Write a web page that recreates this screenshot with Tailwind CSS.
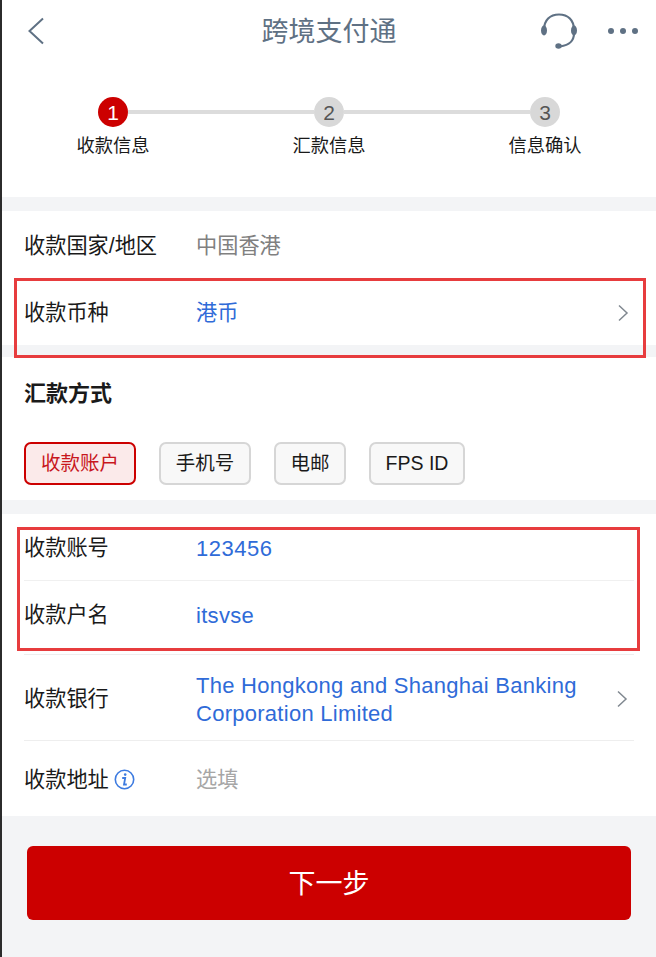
<!DOCTYPE html>
<html lang="zh">
<head>
    <meta charset="UTF-8">
    <meta name="viewport" content="width=device-width, initial-scale=1.0">
    <title>跨境支付通</title>
    <script src="https://cdn.jsdelivr.net/npm/@tailwindcss/browser@4"></script>
</head>
<body class="bg-white">
    <div class="relative w-[656px] h-[957px] overflow-hidden border-l-2 border-[#2b2b2b] bg-white text-[21.2px] text-[#1a1a1a] font-['Liberation_Sans','Noto_Sans_CJK_SC',sans-serif]">
        <!-- header -->
        <div class="grid grid-cols-[1fr_auto_1fr] items-center h-[62px] pl-[25px] pr-[18px]">
            <svg class="w-[18px] h-[28px]" viewBox="0 0 18 28" fill="none" stroke="#5f7184" stroke-width="2"><path d="M16 1.5 2.5 14 16 26.5"/></svg>
            <div class="text-[27px] leading-none text-[#5f7184] pt-[3px] mr-[7px]">跨境支付通</div>
            <div class="flex items-center justify-end">
                <svg class="w-[38px] h-[36px] mr-[30px]" viewBox="0 0 38 36" fill="none" stroke="#5f7184" stroke-width="2.2">
                    <path d="M4 17C4 7 10 1.5 19 1.5S34 7 34 17"/>
                    <path d="M34 20C34 28 30 32 20 33.5"/>
                    <ellipse cx="4" cy="17.5" rx="3" ry="5" fill="#5f7184" stroke="none"/>
                    <ellipse cx="34" cy="17.5" rx="3" ry="5" fill="#5f7184" stroke="none"/>
                    <ellipse cx="18.5" cy="33" rx="3.2" ry="2.8" fill="#5f7184" stroke="none"/>
                </svg>
                <div class="flex gap-[6px]">
                    <span class="w-[6px] h-[6px] rounded-full bg-[#5f7184]"></span>
                    <span class="w-[6px] h-[6px] rounded-full bg-[#5f7184]"></span>
                    <span class="w-[6px] h-[6px] rounded-full bg-[#5f7184]"></span>
                </div>
            </div>
        </div>

        <!-- stepper -->
        <div class="h-[135px] pt-[35px]">
            <div class="flex items-center pl-[96px] text-[21px] leading-none">
                <span class="flex items-center justify-center w-[30px] h-[30px] rounded-full bg-[#cc0000] text-white">1</span>
                <span class="w-[186px] h-[4px] bg-[#dcdcdc]"></span>
                <span class="flex items-center justify-center w-[30px] h-[30px] rounded-full bg-[#d8d8d8] text-[#555]">2</span>
                <span class="w-[186px] h-[4px] bg-[#dcdcdc]"></span>
                <span class="flex items-center justify-center w-[30px] h-[30px] rounded-full bg-[#d8d8d8] text-[#555]">3</span>
            </div>
            <div class="flex pl-[3px] mt-[9px] text-[18.3px] leading-[20px]">
                <div class="w-[216px] text-center">收款信息</div>
                <div class="w-[216px] text-center">汇款信息</div>
                <div class="w-[216px] text-center">信息确认</div>
            </div>
        </div>
        <div class="h-[14px] bg-[#f3f4f6]"></div>

        <!-- currency -->
        <div class="flex items-center h-[68px] pl-[22px] pr-[23px] pt-[2px]">
            <div class="w-[172px]">收款国家/地区</div>
            <div class="text-[#808080]">中国香港</div>
        </div>
        <div class="flex items-center h-[66px] pl-[22px] pr-[27px] pt-[1px]">
            <div class="w-[172px]">收款币种</div>
            <div class="flex-1 text-[#2f6bd8]">港币</div>
            <svg class="w-[12px] h-[18px]" viewBox="0 0 12 18" fill="none" stroke="#808890" stroke-width="1.5"><path d="M2 1.5 10 9 2 16.5"/></svg>
        </div>
        <div class="h-[12px] bg-[#f3f4f6]"></div>

        <!-- method -->
        <div class="h-[143px] pl-[22px] pt-[24px]">
            <div class="text-[22px] leading-[26px] font-bold">汇款方式</div>
            <div class="flex gap-[23px] mt-[35px] text-[19.5px]">
                <div class="flex items-center justify-center w-[112px] h-[43px] rounded-[7px] border-2 border-[#cc0000] bg-[#fbeaea] text-[#c8161d]">收款账户</div>
                <div class="flex items-center justify-center w-[92px] h-[43px] rounded-[7px] border-2 border-[#d6d6d6] bg-[#f8f8f8]">手机号</div>
                <div class="flex items-center justify-center w-[72px] h-[43px] rounded-[7px] border-2 border-[#d6d6d6] bg-[#f8f8f8]">电邮</div>
                <div class="flex items-center justify-center w-[96px] h-[43px] rounded-[7px] border-2 border-[#d6d6d6] bg-[#f8f8f8]">FPS ID</div>
            </div>
        </div>
        <div class="h-[14px] bg-[#f3f4f6]"></div>

        <!-- account rows -->
        <div class="flex flex-col ml-[22px] mr-[22px]">
            <div class="flex items-center h-[67px] pt-[1px] border-b border-[#f0f0f0]">
                <div class="w-[172px]">收款账号</div>
                <div class="pt-[2px] text-[22px] text-[#2f6bd8] tracking-[0.5px]">123456</div>
            </div>
            <div class="flex items-center h-[74px] pb-[5px] border-b border-[#eeeeee]">
                <div class="w-[172px]">收款户名</div>
                <div class="text-[22px] text-[#2f6bd8] tracking-[0.3px]">itsvse</div>
            </div>
            <div class="flex items-center h-[86px] pt-[2px] border-b border-[#eeeeee]">
                <div class="w-[172px]">收款银行</div>
                <div class="w-[410px] pt-[2px] text-[22px] leading-[28px] text-[#2f6bd8] tracking-[0.27px]">The Hongkong and Shanghai Banking Corporation Limited</div>
                <svg class="w-[12px] h-[18px] ml-[10px]" viewBox="0 0 12 18" fill="none" stroke="#808890" stroke-width="1.5"><path d="M2 1.5 10 9 2 16.5"/></svg>
            </div>
            <div class="flex items-center h-[75px] pt-[3px]">
                <div class="flex items-center w-[172px]">
                    <span>收款地址</span>
                    <svg class="w-[21px] h-[21px] ml-[5px]" viewBox="0 0 21 21" fill="none" stroke="#3d7be0" stroke-width="1.6">
                        <circle cx="10.5" cy="10.5" r="9.2"/>
                        <path d="M8.2 9H11.2L10 15.5H12.8" stroke-width="1.8"/>
                        <circle cx="11.2" cy="5.6" r="1.3" fill="#3d7be0" stroke="none"/>
                    </svg>
                </div>
                <div class="text-[#a6a6a6]">选填</div>
            </div>
        </div>

        <!-- footer -->
        <div class="h-[141px] bg-[#f3f4f6] pt-[30px] pl-[25px]">
            <button class="flex items-center justify-center w-[604px] h-[74px] pt-[3px] rounded-[6px] bg-[#cc0000] text-white text-[27px]">下一步</button>
        </div>

        <!-- annotation boxes drawn over the screenshot -->
        <div class="absolute left-[12px] top-[278px] w-[632px] h-[80px] border-[3px] border-[#e73c3e]"></div>
        <div class="absolute left-[15px] top-[527px] w-[623px] h-[124px] border-[3px] border-[#e73c3e]"></div>
    </div>
</body>
</html>
